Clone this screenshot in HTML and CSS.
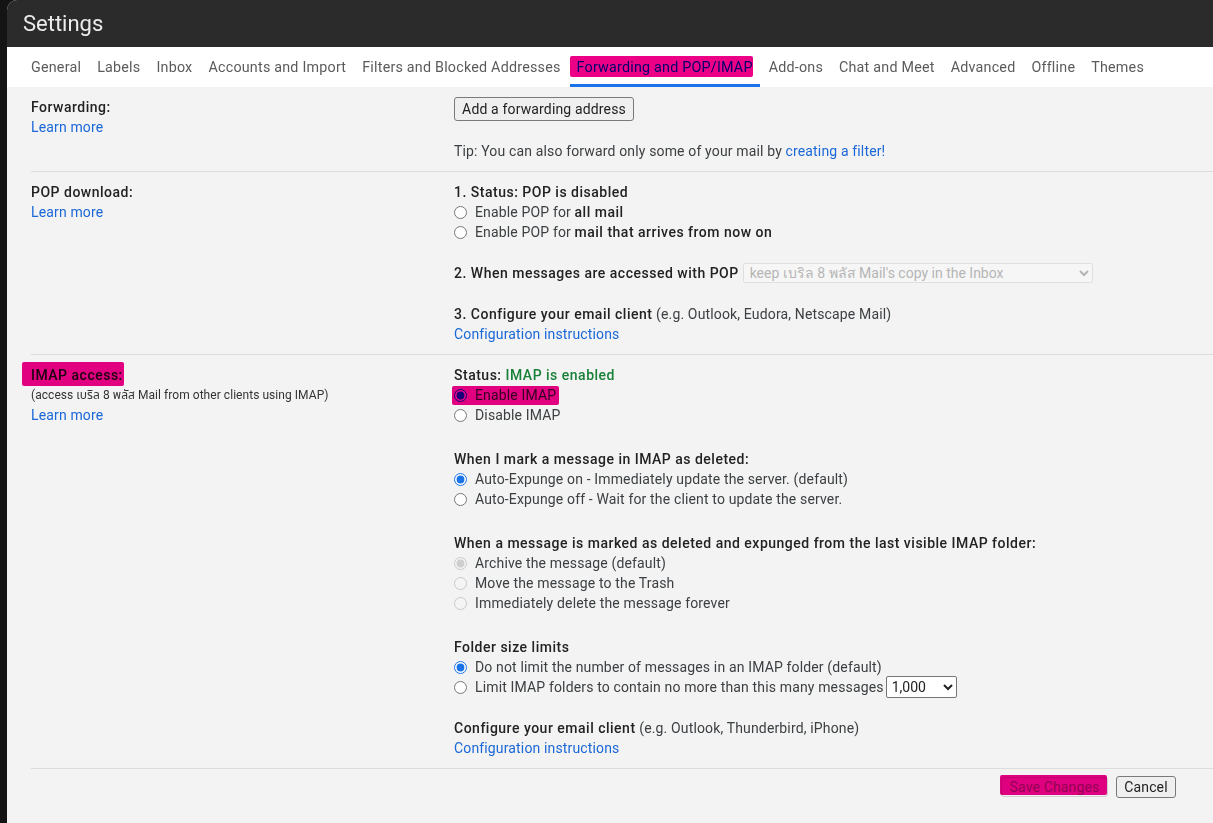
FILE: index.html
```html
<!DOCTYPE html>
<html lang="en">
<head>
<meta charset="utf-8">
<title>Settings</title>
<link rel="stylesheet" href="styles.css">
</head>
<body>
<div class="app">
  <header class="top">
    <h1 class="title">Settings</h1>
  </header>
  <nav class="tabs">
    <a class="tab">General</a>
    <a class="tab">Labels</a>
    <a class="tab">Inbox</a>
    <a class="tab">Accounts and Import</a>
    <a class="tab">Filters and Blocked Addresses</a>
    <a class="tab active"><span class="hl hl-tab">Forwarding and POP/IMAP</span></a>
    <a class="tab">Add-ons</a>
    <a class="tab">Chat and Meet</a>
    <a class="tab">Advanced</a>
    <a class="tab">Offline</a>
    <a class="tab">Themes</a>
  </nav>

  <main class="content">
    <section class="row row-fwd">
      <div class="lbl">
        <div class="lbl-title">Forwarding:</div>
        <a class="link">Learn more</a>
      </div>
      <div class="val">
        <div><button class="btn btn-fwd">Add a forwarding address</button></div>
        <p class="tip">Tip: You can also forward only some of your mail by <a class="link">creating a filter!</a></p>
      </div>
    </section>

    <section class="row row-pop">
      <div class="lbl">
        <div class="lbl-title">POP download:</div>
        <a class="link">Learn more</a>
      </div>
      <div class="val">
        <div class="grp">
          <div class="head">1. Status: POP is disabled</div>
          <label class="opt"><input type="radio" name="pop" class="radio"><span>Enable POP for <b class="strong">all mail</b></span></label>
          <label class="opt"><input type="radio" name="pop" class="radio"><span>Enable POP for <b class="strong">mail that arrives from now on</b></span></label>
        </div>
        <div class="grp grp-pop">
          <div class="line"><span class="head">2. When messages are accessed with POP</span>
            <select class="sel sel-pop" disabled><option>keep เบริล 8 พลัส Mail's copy in the Inbox</option></select>
          </div>
        </div>
        <div class="grp grp-pop">
          <div><span class="head">3. Configure your email client</span> (e.g. Outlook, Eudora, Netscape Mail)</div>
          <a class="link">Configuration instructions</a>
        </div>
      </div>
    </section>

    <section class="row row-imap">
      <div class="lbl">
        <div class="lbl-title"><span class="hl hl-imap">IMAP access:</span></div>
        <div class="lbl-note">(access เบริล 8 พลัส Mail from other clients using IMAP)</div>
        <a class="link">Learn more</a>
      </div>
      <div class="val">
        <div class="grp">
          <div class="head">Status: <span class="ok">IMAP is enabled</span></div>
          <label class="opt"><span class="hl hl-enable"><input type="radio" name="imap" class="radio" checked><span>Enable IMAP</span></span></label>
          <label class="opt"><input type="radio" name="imap" class="radio"><span>Disable IMAP</span></label>
        </div>
        <div class="grp grp-imap">
          <div class="head">When I mark a message in IMAP as deleted:</div>
          <label class="opt"><input type="radio" name="exp" class="radio" checked><span>Auto-Expunge on - Immediately update the server. (default)</span></label>
          <label class="opt"><input type="radio" name="exp" class="radio"><span>Auto-Expunge off - Wait for the client to update the server.</span></label>
        </div>
        <div class="grp grp-imap">
          <div class="head">When a message is marked as deleted and expunged from the last visible IMAP folder:</div>
          <label class="opt"><input type="radio" name="arc" class="radio" checked disabled><span>Archive the message (default)</span></label>
          <label class="opt"><input type="radio" name="arc" class="radio" disabled><span>Move the message to the Trash</span></label>
          <label class="opt"><input type="radio" name="arc" class="radio" disabled><span>Immediately delete the message forever</span></label>
        </div>
        <div class="grp grp-imap">
          <div class="head">Folder size limits</div>
          <label class="opt"><input type="radio" name="lim" class="radio" checked><span>Do not limit the number of messages in an IMAP folder (default)</span></label>
          <label class="opt opt-sel"><input type="radio" name="lim" class="radio"><span>Limit IMAP folders to contain no more than this many messages</span>
            <select class="sel sel-lim"><option>1,000</option></select>
          </label>
        </div>
        <div class="grp grp-last">
          <div><span class="head">Configure your email client</span> (e.g. Outlook, Thunderbird, iPhone)</div>
          <a class="link">Configuration instructions</a>
        </div>
      </div>
    </section>

    <div class="actions">
      <span class="hl hl-save"><button class="btn btn-save" disabled>Save Changes</button></span>
      <button class="btn btn-cancel">Cancel</button>
    </div>
  </main>
</div>
</body>
</html>
```

FILE: styles.css
```css
* { box-sizing: border-box; }

html, body {
  margin: 0;
  height: 100%;
}

body {
  background: #141414;
  font-family: Roboto, "Noto Sans", "Noto Sans Thai", "DejaVu Sans", sans-serif;
  font-size: 14px;
  letter-spacing: 0.15px;
  color: #3c4043;
  overflow: hidden;
}

.app {
  margin-left: 7px;
  min-height: 100%;
  background: #f3f3f3;
  border-top-left-radius: 10px;
  overflow: hidden;
}

.top {
  height: 47px;
  background: #2b2b2b;
  padding-left: 16px;
  display: flex;
  align-items: center;
}

.title {
  margin: 0;
  font-size: 22px;
  font-weight: 400;
  color: #ececec;
  letter-spacing: 0;
}

.tabs {
  height: 40px;
  background: #fff;
  display: flex;
  align-items: stretch;
  gap: 16px;
  padding-left: 24px;
}

.tab {
  display: flex;
  align-items: center;
  color: #5b5b5b;
  font-size: 14.3px;
  letter-spacing: 0.22px;
  white-space: nowrap;
}

.tab.active {
  color: #0b57d0;
  padding: 0 7px;
  margin: 0 -7px;
  box-shadow: inset 0 -3px 0 #1a73e8;
}

/* marker highlights drawn over the screenshot */
.hl {
  position: relative;
  display: inline-flex;
  align-items: center;
}
.hl::after {
  content: "";
  position: absolute;
  background: #ec0086;
  mix-blend-mode: multiply;
  border-radius: 2px;
  pointer-events: none;
}
.hl-tab::after { top: -3px; bottom: -2px; left: -7px; right: 0; }
.hl-imap::after { top: -3px; bottom: -1px; left: -9px; right: -1px; }
.hl-enable::after { top: 1px; bottom: 0; left: -2px; right: -3px; }
.hl-save::after { top: -2px; bottom: 2px; left: -1px; right: 1px; }

.content {
  padding-left: 24px;
}

.row {
  display: grid;
  grid-template-columns: 423px 1fr;
  padding: 10px 0;
  border-bottom: 1px solid #dcdcdc;
  line-height: 20px;
}

.lbl {
  display: flex;
  flex-direction: column;
  align-items: flex-start;
}

.lbl-title {
  font-weight: 500;
  letter-spacing: 0.5px;
  color: #222;
}

.lbl-note {
  font-size: 12px;
  letter-spacing: 0.05px;
  color: #333;
}

.link {
  color: #1a67d8;
  cursor: pointer;
}

.val {
  display: flex;
  flex-direction: column;
  align-items: flex-start;
}

.tip {
  margin: 20px 0 0;
}

.grp {
  display: flex;
  flex-direction: column;
  align-items: flex-start;
}

.grp-pop { margin-top: 21px; }
.grp-imap { margin-top: 24px; }
.grp-last { margin-top: 20px; }

.head {
  font-weight: 500;
  letter-spacing: 0.5px;
  color: #222;
}

.strong {
  font-weight: 500;
  letter-spacing: 0.5px;
  color: #222;
}

.ok {
  color: #188038;
}

.opt {
  display: flex;
  align-items: center;
  height: 20px;
  white-space: nowrap;
}

.opt-sel {
  height: 22px;
  margin-top: -1px;
}

.radio {
  width: 13px;
  height: 13px;
  margin: 0 8px 0 0;
  accent-color: #1a73e8;
}

.line {
  display: flex;
  align-items: center;
  height: 20px;
}

.sel {
  font-family: Roboto, "Noto Sans", sans-serif;
  font-size: 14px;
}

.sel-pop {
  margin-left: 4px;
  width: 350px;
  height: 20px;
  padding: 0 2px;
  border: 1px solid #d6d6d6;
  border-radius: 2px;
  background: #f7f7f7;
  color: #9a9a9a;
}

.sel-lim {
  margin-left: 2px;
  width: 71px;
  height: 22px;
  padding: 0 1px;
  border: 1px solid #767676;
  border-radius: 2px;
  background: #fff;
  color: #222;
}

.btn {
  font-family: Roboto, "Noto Sans", sans-serif;
  font-size: 14px;
  letter-spacing: 0.15px;
  background: #efefef;
  border: 1px solid #7a7a7a;
  border-radius: 3px;
  color: #222;
  padding: 0;
  white-space: nowrap;
}

.btn-fwd {
  height: 24px;
  width: 180px;
}

.actions {
  display: flex;
  justify-content: flex-end;
  align-items: center;
  gap: 8px;
  padding: 7px 37px 0 0;
}

.btn-save {
  height: 20px;
  width: 107px;
  border-color: #cfcfcf;
  color: #a0a0a0;
  background: #f1f1f1;
}

.btn-cancel {
  height: 22px;
  width: 60px;
}
```
